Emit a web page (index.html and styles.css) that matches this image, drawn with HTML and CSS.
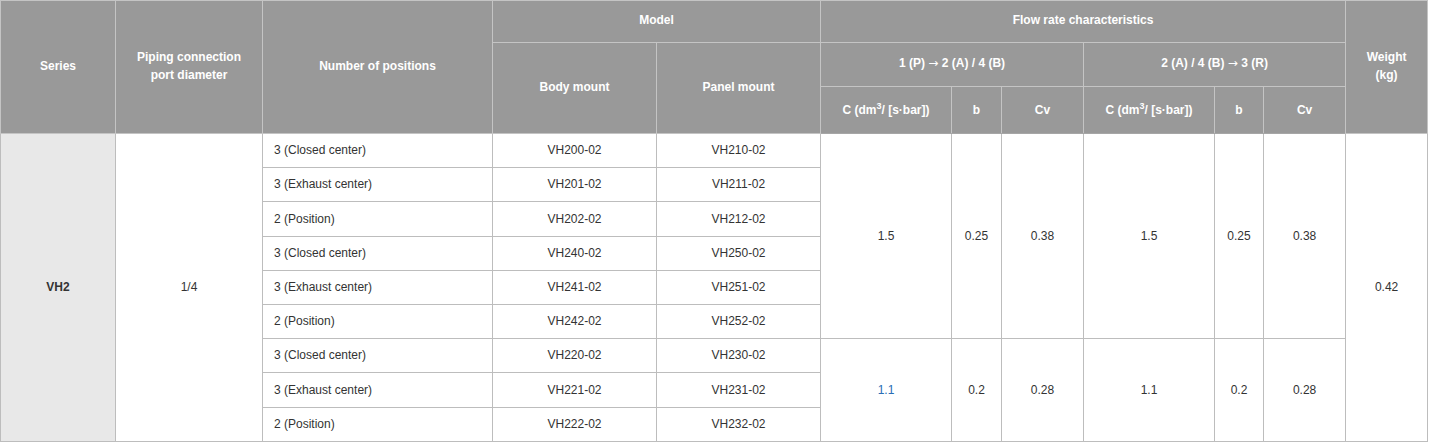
FILE: index.html
```html
<!DOCTYPE html>
<html>
<head>
<meta charset="utf-8">
<link rel="stylesheet" href="styles.css">
</head>
<body>
<table class="spec">
  <colgroup>
    <col class="c115"><col class="c147"><col class="c230"><col class="c164"><col class="c164">
    <col class="c131"><col class="c50"><col class="c82"><col class="c131"><col class="c49"><col class="c82"><col class="c82">
  </colgroup>
  <thead>
    <tr class="h1">
      <th rowspan="3">Series</th>
      <th rowspan="3">Piping connection<br>port diameter</th>
      <th rowspan="3">Number of positions</th>
      <th colspan="2">Model</th>
      <th colspan="6">Flow rate characteristics</th>
      <th rowspan="3">Weight<br>(kg)</th>
    </tr>
    <tr class="h2">
      <th rowspan="2">Body mount</th>
      <th rowspan="2">Panel mount</th>
      <th colspan="3">1 (P) <span class="arr">→</span> 2 (A) / 4 (B)</th>
      <th colspan="3">2 (A) / 4 (B) <span class="arr">→</span> 3 (R)</th>
    </tr>
    <tr class="h3">
      <th>C (dm<sup>3</sup>/ [s·bar])</th>
      <th>b</th>
      <th>Cv</th>
      <th>C (dm<sup>3</sup>/ [s·bar])</th>
      <th>b</th>
      <th>Cv</th>
    </tr>
  </thead>
  <tbody>
    <tr>
      <td rowspan="9" class="series">VH2</td>
      <td rowspan="9">1/4</td>
      <td class="pos">3 (Closed center)</td>
      <td>VH200-02</td><td>VH210-02</td>
      <td rowspan="6">1.5</td><td rowspan="6">0.25</td><td rowspan="6">0.38</td>
      <td rowspan="6">1.5</td><td rowspan="6">0.25</td><td rowspan="6">0.38</td>
      <td rowspan="9">0.42</td>
    </tr>
    <tr><td class="pos">3 (Exhaust center)</td><td>VH201-02</td><td>VH211-02</td></tr>
    <tr class="tall"><td class="pos">2 (Position)</td><td>VH202-02</td><td>VH212-02</td></tr>
    <tr><td class="pos">3 (Closed center)</td><td>VH240-02</td><td>VH250-02</td></tr>
    <tr><td class="pos">3 (Exhaust center)</td><td>VH241-02</td><td>VH251-02</td></tr>
    <tr><td class="pos">2 (Position)</td><td>VH242-02</td><td>VH252-02</td></tr>
    <tr>
      <td class="pos">3 (Closed center)</td><td>VH220-02</td><td>VH230-02</td>
      <td rowspan="3" class="link">1.1</td><td rowspan="3">0.2</td><td rowspan="3">0.28</td>
      <td rowspan="3">1.1</td><td rowspan="3">0.2</td><td rowspan="3">0.28</td>
    </tr>
    <tr class="tall"><td class="pos">3 (Exhaust center)</td><td>VH221-02</td><td>VH231-02</td></tr>
    <tr><td class="pos">2 (Position)</td><td>VH222-02</td><td>VH232-02</td></tr>
  </tbody>
</table>
</body>
</html>
```

FILE: styles.css
```css
html, body {
  margin: 0;
  padding: 0;
  background: #ffffff;
}

.spec {
  border-collapse: collapse;
  table-layout: fixed;
  width: 1428px;
  font-family: "Liberation Sans", Arial, sans-serif;
  font-size: 12px;
  color: #333333;
}

.c115 { width: 115px; }
.c147 { width: 147px; }
.c230 { width: 230px; }
.c164 { width: 164px; }
.c131 { width: 131px; }
.c50 { width: 50px; }
.c49 { width: 49px; }
.c82 { width: 82px; }

.spec th,
.spec td {
  border: 1px solid #bdbdbd;
  text-align: center;
  vertical-align: middle;
  padding: 0 6px;
  line-height: 18px;
}

.spec th {
  background: #999999;
  color: #ffffff;
  font-weight: bold;
  border-color: #c4c4c4;
  padding-bottom: 3px;
}

.spec thead tr.h1 { height: 42px; }
.spec thead tr.h2 { height: 44px; }
.spec thead tr.h3 { height: 47px; }

.spec thead tr.h3 th { border-bottom-color: #a6a6a6; padding-bottom: 0; }

.spec .arr {
  font-family: "DejaVu Sans", sans-serif;
  font-weight: normal;
  font-size: 12px;
}

.spec sup {
  font-size: 9px;
  line-height: 0;
  vertical-align: 5px;
}

.spec tbody tr { height: 34px; }
.spec tbody tr.tall { height: 35px; }

.spec td {
  padding-bottom: 1px;
}

.spec td.pos {
  text-align: left;
  padding-left: 11px;
}

.spec td.series {
  background: #e8e8e8;
  font-weight: bold;
}

.spec td.link {
  color: #2a6db5;
}
```
